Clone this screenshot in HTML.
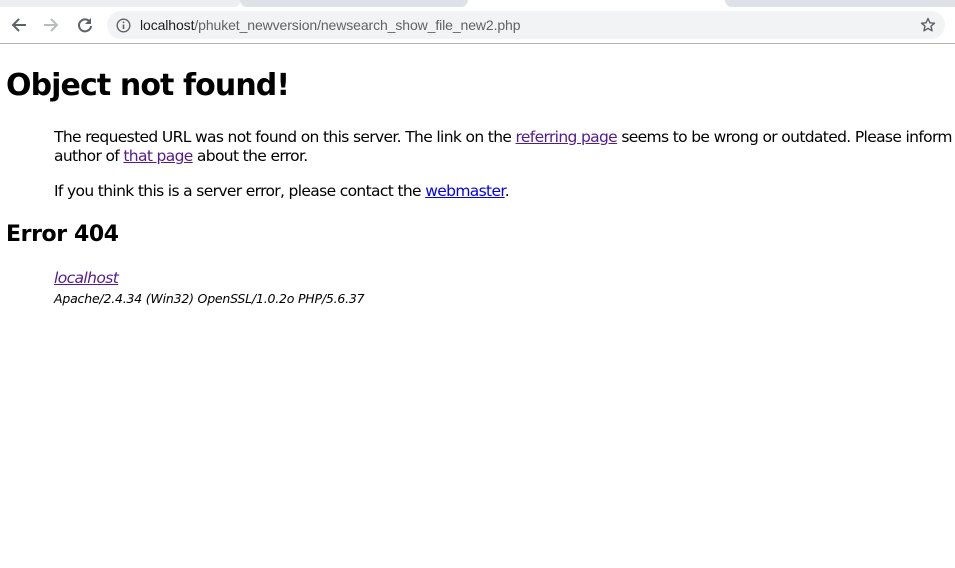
<!DOCTYPE html>
<html><head><style>
body{margin:0;width:955px;height:568px;overflow:hidden;background:#fff;font-family:"DejaVu Sans",Verdana,sans-serif;color:#000;position:relative}
.tabs{position:absolute;left:0;top:0;width:955px;height:7px;background:#fff}
.t1{position:absolute;left:0;top:0;width:240px;height:7px;background:#eceef1;border-radius:0 0 6px 0}
.t2{position:absolute;left:240px;top:0;width:228px;height:7px;background:#dee1e6;border-radius:0 0 8px 8px}
.t3{position:absolute;left:725px;top:0;width:230px;height:7px;background:#dee1e6;border-radius:0 0 0 8px}
.bar{position:absolute;left:0;top:43px;width:955px;height:1px;background:#b5b5b5}
.url{position:absolute;left:107px;top:11px;width:838px;height:28px;background:#f1f3f4;border-radius:14px}
.url span{position:absolute;left:33px;top:6px;font-family:"Liberation Sans",Arial,sans-serif;font-size:14px;color:#5f6368;white-space:nowrap;letter-spacing:-0.1px}
.url b{font-weight:normal;color:#202124}
.t{position:absolute;white-space:nowrap}
a{color:#551a8b}
a.b{color:#0000ee}
.wrap{position:absolute;left:0;top:0;width:955px;height:568px;overflow:hidden}
</style></head><body>
<div class="wrap">
<div class="tabs"><div class="t1"></div><div class="t2"></div><div class="t3"></div></div>
<svg style="position:absolute;left:10px;top:16px" width="18" height="18" viewBox="0 0 18 18"><path d="M16 9H3M9 3L3 9l6 6" stroke="#5f6368" stroke-width="2" fill="none"/></svg>
<svg style="position:absolute;left:42px;top:16px" width="18" height="18" viewBox="0 0 18 18"><path d="M2 9h13M9 3l6 6-6 6" stroke="#b8bbbf" stroke-width="2" fill="none"/></svg>
<svg style="position:absolute;left:76px;top:16px" width="18" height="18" viewBox="0 0 18 18"><path d="M14 6A6 6 0 1 0 15 10" stroke="#5f6368" stroke-width="2" fill="none"/><path d="M15 2v6h-6z" fill="#5f6368"/></svg>
<div class="url">
<svg style="position:absolute;left:9px;top:7px" width="15" height="15" viewBox="0 0 15 15"><circle cx="7.5" cy="7.5" r="6.3" stroke="#5f6368" stroke-width="1.4" fill="none"/><path d="M7.5 6.5v4.5" stroke="#5f6368" stroke-width="1.6"/><circle cx="7.5" cy="4.3" r="0.9" fill="#5f6368"/></svg>
<span><b>localhost</b>/phuket_newversion/newsearch_show_file_new2.php</span>
<svg style="position:absolute;left:813px;top:6px" width="16" height="16" viewBox="0 0 16 16"><path d="M8 1.5l1.9 4.3 4.6.4-3.5 3 1.1 4.6L8 11.4l-4.1 2.4 1.1-4.6-3.5-3 4.6-.4z" stroke="#5f6368" stroke-width="1.4" fill="none" stroke-linejoin="round"/></svg>
</div>
<div class="bar"></div>
<div class="t" style="left:6px;top:68px;font-size:30px;font-weight:bold;letter-spacing:-0.9px">Object not found!</div>
<div class="t" style="left:54px;top:128px;font-size:15.5px;line-height:19px;letter-spacing:-0.65px">The requested URL was not found on this server. The link on the <a href="#">referring page</a> seems to be wrong or outdated. Please inform the<br>author of <a href="#">that page</a> about the error.</div>
<div class="t" style="left:54px;top:182px;font-size:15.5px;letter-spacing:-0.65px">If you think this is a server error, please contact the <a class="b" href="#">webmaster</a>.</div>
<div class="t" style="left:6px;top:222px;font-size:22px;font-weight:bold;letter-spacing:-0.4px">Error 404</div>
<div class="t" style="left:54px;top:269px;font-size:15.5px;font-style:italic;letter-spacing:-0.6px"><a href="#">localhost</a></div>
<div class="t" style="left:54px;top:291px;font-size:12.5px;font-style:italic;letter-spacing:-0.2px">Apache/2.4.34 (Win32) OpenSSL/1.0.2o PHP/5.6.37</div>
</div>
</body></html>
